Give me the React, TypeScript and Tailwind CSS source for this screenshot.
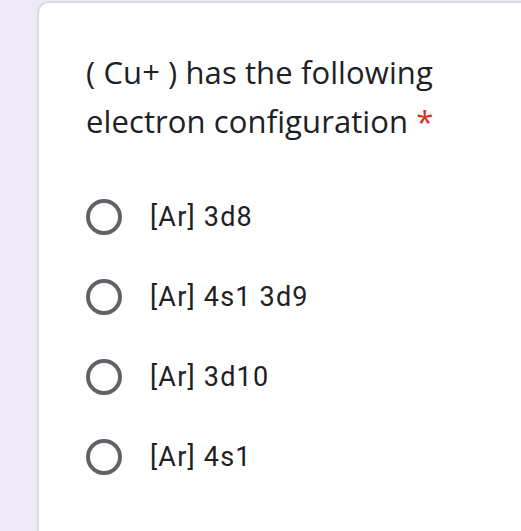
import React from "react";

const options = ["[Ar] 3d8", "[Ar] 4s1 3d9", "[Ar] 3d10", "[Ar] 4s1"];

export default function App() {
  return (
    <div className="w-[521px] h-[531px] overflow-hidden bg-[#ede9f7] pl-[37px] pt-[1px]">
      <div className="w-[520px] h-[560px] bg-white rounded-tl-[12px] border-l-2 border-t-2 border-[#dadce0] pl-[47px] pt-[45px]">
        <div
          className="text-[#202124] text-[31px] leading-[49px] tracking-[0.1px]"
          style={{ fontFamily: "'Open Sans', sans-serif" }}
        >
          <div>( Cu+ ) has the following</div>
          <div>
            electron configuration <span className="text-[#d93025]">*</span>
          </div>
        </div>
        <div className="mt-[52px] flex flex-col gap-[42px]">
          {options.map((o) => (
            <div key={o} className="flex items-center h-[38px]">
              <div className="w-[36px] h-[36px] rounded-full border-[4px] border-[#5f6368] shrink-0" />
              <div
                className="ml-[28px] text-[#202124] text-[27px] tracking-[1.2px]"
                style={{ fontFamily: "Roboto, sans-serif" }}
              >
                {o}
              </div>
            </div>
          ))}
        </div>
      </div>
    </div>
  );
}
